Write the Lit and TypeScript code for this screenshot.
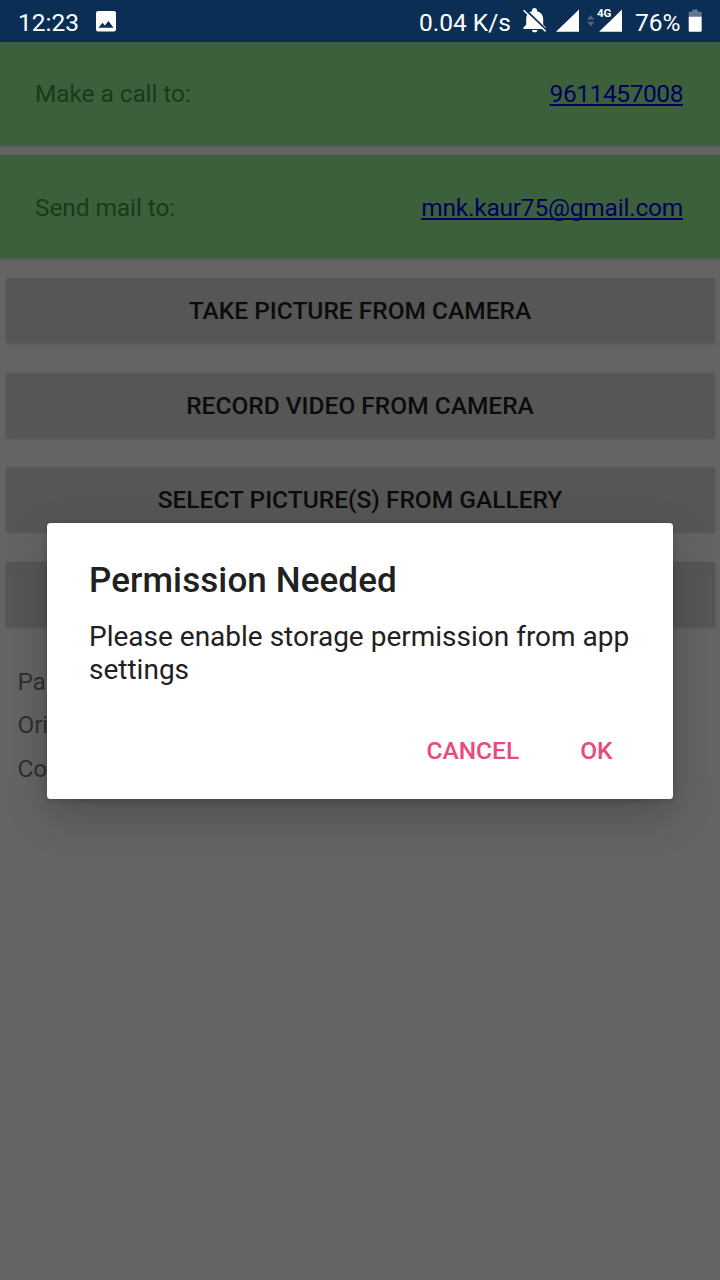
import { LitElement, html, css } from "lit";
import { customElement } from "lit/decorators.js";

@customElement("status-bar")
class StatusBar extends LitElement {
  static styles = css`
    :host { display: flex; height: 42px; box-sizing: border-box; padding: 2px 18px 0 18px;
      background: #0a2e54; color: #fff; font: 24.5px/41px Roboto, sans-serif; white-space: pre; }
    svg { display: block; flex: none; }
    .time { width: 78px; }
    .grow { flex: 1; }
    .rate { width: 104px; }
    .level { width: 53px; }
    .net { font: 700 10px Roboto, sans-serif; }
  `;
  render() {
    return html`
      <span class="time">12:23</span><svg width="20" height="40" viewBox="96 2 20 40"><path fill="#fff" fill-rule="evenodd" d="M98 11h16a2 2 0 0 1 2 2v16.500a2 2 0 0 1-2 2H98a2 2 0 0 1-2-2V13a2 2 0 0 1 2-2zM98.500 27.700h15l-5-6.700-3.600 4.500-2.400-2.700z"/></svg>
      <span class="grow"></span>
      <span class="rate">0.04 K/s</span>
      <svg width="112" height="40" viewBox="523 2 112 40">
        <path fill="#fff" d="M523.500 29v-1.600l2.700-2.600v-5.600c0-4 2-7 5.800-7.900v-.7a2.500 2.500 0 0 1 5 0v.7c4 1 6.200 4 6.200 7.900v5.600l2.700 2.600V29zM532 29.900h5.400a2.700 2.400 0 0 1-5.400 0z"/>
        <path stroke="#0a2e54" stroke-width="1.900" fill="none" d="M524.500 8.800l22.500 22"/>
        <path stroke="#fff" stroke-width="1.500" fill="none" d="M523.600 10.200l22 21.200"/>
        <path fill="#fff" d="M579 9.500v22.300h-23zM611.500 19.700L622 9.500v22.300h-23z"/>
        <path fill="#53677f" d="M587 19.500l3.700-4.500 3.700 4.500zM587 21.800h7.400l-3.700 4.500z"/>
        <text class="net" x="597" y="17" fill="#fff" textLength="14.500" lengthAdjust="spacingAndGlyphs">4G</text>
      </svg>
      <span class="level">76%</span>
      <svg width="14" height="40" viewBox="688 2 14 40"><path fill="#62768e" d="M692.300 9.500h5.400v2.300h4V17h-13v-5.200h3.600z"/><path fill="#fff" d="M688.700 16.700h13v14a1 1 0 0 1-1 1h-11a1 1 0 0 1-1-1z"/></svg>
    `;
  }
}

@customElement("permission-dialog")
class PermissionDialog extends LitElement {
  static styles = css`
    :host { position: absolute; left: 47px; top: 523px; width: 626px; height: 275.500px;
      box-sizing: border-box; padding: 37px 42px 0; background: #fff; border-radius: 3.5px;
      color: #212121; font-family: Roboto, sans-serif;
      box-shadow: 0 16px 42px rgba(0,0,0,.22), 0 2px 6px rgba(0,0,0,.16); }
    h2 { margin: 0; font-size: 35px; line-height: 41px; font-weight: 500; letter-spacing: .1px; }
    p { margin: 19px 0 0; font-size: 28px; line-height: 33px; white-space: pre-line; }
    .actions { display: flex; justify-content: flex-end; gap: 61px; margin: 49px 18.500px 0 0;
      color: #ec4880; font-size: 24.5px; line-height: 31px; font-weight: 500; }
  `;
  render() {
    return html`
      <h2>Permission Needed</h2>
      <p>Please enable storage permission from app
settings</p>
      <div class="actions"><span>CANCEL</span><span>OK</span></div>
    `;
  }
}

@customElement("app-root")
class AppRoot extends LitElement {
  static styles = css`
    :host { display: block; position: relative; height: 1280px; overflow: hidden;
      background: #646464; font: 24.5px/30px Roboto, sans-serif; color: #2d2d2d; }
    .contact { display: flex; justify-content: space-between; align-items: center; height: 103px;
      box-sizing: border-box; padding: 2px 37px 0 35px; background: #3c603c; color: #1a3a1a;
      box-shadow: 0 1px 3px rgba(0,0,0,.2); margin-bottom: 10px; letter-spacing: -.1px; }
    .contact.first { padding-top: 1px; }
    .link { color: #00005c; letter-spacing: -.22px; text-decoration: underline; text-decoration-thickness: 1.5px; text-underline-offset: 2px; text-decoration-skip-ink: none; }
    .phone { letter-spacing: -.43px; }
    .buttons { display: grid; gap: 29.500px; padding: 10px 5px 0 6px; }
    .button { height: 65px; box-sizing: border-box; padding-top: 1px; background: #565656; color: #0c0c0c;
      border-radius: 2px; text-align: center; line-height: 64px; font-weight: 500; text-indent: -1px;
      box-shadow: 0 1px 3px rgba(0,0,0,.12); }
    .details { display: grid; gap: 13.500px; padding: 40px 18px 0 17.500px; color: #303030; letter-spacing: -.2px; }
  `;
  render() {
    const contacts = [["Make a call to:", "9611457008", "link phone", "contact first"], ["Send mail to:", "mnk.kaur75@gmail.com", "link", "contact"]];
    const buttons = ["TAKE PICTURE FROM CAMERA", "RECORD VIDEO FROM CAMERA", "SELECT PICTURE(S) FROM GALLERY", ""];
    return html`
      <status-bar></status-bar>
      ${contacts.map(([label, value, cls, row]) => html`<div class=${row}><span>${label}</span><span class=${cls}>${value}</span></div>`)}
      <div class="buttons">${buttons.map((b) => html`<div class="button">${b}</div>`)}</div>
      <div class="details"><span>Pa</span><span>Ori</span><span>Co</span></div>
      <permission-dialog></permission-dialog>
    `;
  }
}
